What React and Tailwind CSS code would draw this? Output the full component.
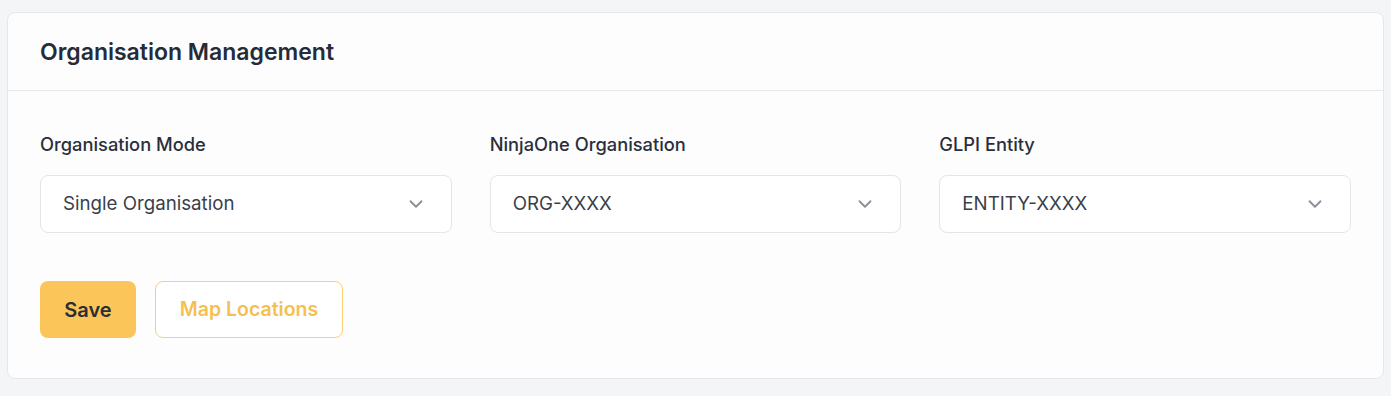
import { ChevronDown } from "lucide-react";

const fields = [
  { label: "Organisation Mode", value: "Single Organisation" },
  { label: "NinjaOne Organisation", value: "ORG-XXXX" },
  { label: "GLPI Entity", value: "ENTITY-XXXX" }
];

const SelectField = ({ label, value }) => (
  <div className="flex flex-col">
    <label className="text-[18.3px] font-medium leading-6 text-[#2a2f3c]">{label}</label>
    <button className="mt-[19px] flex h-[58px] items-center justify-between rounded-lg border border-[#e3e5e9] bg-white pl-[22px] pr-[24px] text-left">
      <span className="text-[18.7px] text-[#3a3f4b]">{value}</span>
      <ChevronDown className="h-[22px] w-[22px] text-[#8a8f99]" strokeWidth={2} />
    </button>
  </div>
);

const App = () => {
  return (
    <div className="min-h-screen bg-[#f4f5f7] pb-[18px] pl-[7px] pr-[7px] pt-3 font-['Inter',sans-serif]">
      <div className="rounded-lg border border-[#e5e7eb] bg-[#fdfdfd]">
        <div className="border-b border-[#e5e7eb] px-8 pb-[24px] pt-[25px]">
          <h2 className="text-[23px] font-semibold leading-7 text-[#262b38]">Organisation Management</h2>
        </div>
        <div className="px-8 pb-[40px] pt-[41px]">
          <div className="grid grid-cols-3 gap-[38px]">
            {fields.map((f) => (
              <SelectField key={f.label} {...f} />
            ))}
          </div>
          <div className="mt-12 flex gap-[19px]">
            <button className="h-[57px] w-[96px] rounded-lg bg-[#fbc55a] text-[20px] font-semibold text-[#2a2f33]">
              Save
            </button>
            <button className="h-[57px] w-[188px] rounded-lg border border-[#f8cf72] bg-white text-[19.5px] font-semibold text-[#f6c04e]">
              Map Locations
            </button>
          </div>
        </div>
      </div>
    </div>
  );
};

export default App;
